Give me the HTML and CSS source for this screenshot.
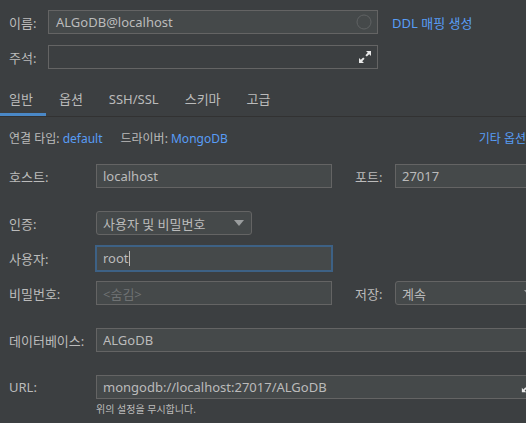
FILE: index.html
```html
<!DOCTYPE html>
<html lang="ko">
<head>
    <meta charset="UTF-8">
    <title>데이터 소스 - ALGoDB@localhost</title>
    <link rel="stylesheet" href="styles.css">
</head>
<body>
    <div class="page">
        <div class="top-row">
            <label class="top-label">이름:</label>
            <div class="field top-field">
                <span class="value">ALGoDB@localhost</span>
                <svg class="ring" width="16" height="16" viewBox="0 0 16 16"><circle cx="8" cy="8" r="7" fill="none" stroke="#5f6263" stroke-width="1"/></svg>
            </div>
            <a class="link ddl">DDL 매핑 생성</a>
        </div>
        <div class="top-row comment-row">
            <label class="top-label">주석:</label>
            <div class="field top-field">
                <span class="value"></span>
                <svg class="expand" width="14" height="14" viewBox="0 0 14 14">
                    <path d="M8 1h5v5l-1.8-1.8-2.4 2.4-1.4-1.4 2.4-2.4z" fill="#e8e8e8"/>
                    <path d="M6 13H1V8l1.8 1.8 2.4-2.4 1.4 1.4-2.4 2.4z" fill="#e8e8e8"/>
                </svg>
            </div>
        </div>

        <div class="tabs">
            <div class="tab active">일반</div>
            <div class="tab">옵션</div>
            <div class="tab">SSH/SSL</div>
            <div class="tab">스키마</div>
            <div class="tab">고급</div>
        </div>

        <div class="info-row">
            <span>연결 타입: <a class="link">default</a></span>
            <span class="driver">드라이버: <a class="link">MongoDB</a></span>
            <a class="link more">기타 옵션</a>
        </div>

        <div class="form">
            <div class="row host-row">
                <label class="label">호스트:</label>
                <div class="field short"><span class="value">localhost</span></div>
                <label class="side-label">포트:</label>
                <div class="field grow"><span class="value">27017</span></div>
            </div>
            <div class="row auth-row">
                <label class="label">인증:</label>
                <div class="field combo">
                    <span class="value">사용자 및 비밀번호</span>
                    <span class="arrow"></span>
                </div>
            </div>
            <div class="row user-row">
                <label class="label">사용자:</label>
                <div class="field short focused"><span class="value">root<span class="caret"></span></span></div>
            </div>
            <div class="row">
                <label class="label">비밀번호:</label>
                <div class="field short"><span class="value muted">&lt;숨김&gt;</span></div>
                <label class="side-label">저장:</label>
                <div class="field grow combo save">
                    <span class="value">계속</span>
                    <span class="arrow"></span>
                </div>
            </div>
            <div class="row db-row">
                <label class="label">데이터베이스:</label>
                <div class="field grow"><span class="value">ALGoDB</span></div>
            </div>
            <div class="row url-row">
                <label class="label">URL:</label>
                <div class="field grow url-field">
                    <span class="value">mongodb://localhost:27017/ALGoDB</span>
                    <svg class="expand small" width="12" height="12" viewBox="0 0 14 14">
                        <path d="M6 13H1V8l1.8 1.8 2.4-2.4 1.4 1.4-2.4 2.4z" fill="#e8e8e8"/>
                    </svg>
                </div>
            </div>
            <div class="hint">위의 설정을 무시합니다.</div>
        </div>
    </div>
</body>
</html>
```

FILE: styles.css
```css
body {
    margin: 0;
    background-color: #3c3f41;
    color: #bbbbbb;
    font-family: "Noto Sans", "Noto Sans CJK KR", sans-serif;
    font-size: 13px;
    overflow: hidden;
}
.page {
    width: 545px;
    padding-top: 10px;
}
.link {
    color: #589df6;
    text-decoration: none;
}
.field {
    box-sizing: border-box;
    display: flex;
    align-items: center;
    height: 24px;
    background: #45494a;
    border: 1px solid #646464;
    padding: 0 6px;
}
.field .value {
    flex: 1;
    white-space: nowrap;
    overflow: hidden;
}
.muted {
    color: #6f7273;
}

/* top part */
.top-row {
    display: flex;
    align-items: center;
    height: 24px;
}
.comment-row {
    margin-top: 11px;
}
.top-label {
    width: 39px;
    padding-left: 9px;
}
.top-field {
    width: 330px;
}
.top-field .value {
    padding-left: 1px;
}
.comment-row .top-field {
    background: #3c3f41;
}
.ring {
    margin-right: -1px;
}
.expand {
    margin-right: -1px;
}
.ddl {
    margin-left: 14px;
}

/* tabs */
.tabs {
    display: flex;
    margin-top: 16px;
    margin-left: -4px;
    height: 31px;
    border-bottom: 1px solid #323232;
}
.tab {
    padding: 0 13px;
    line-height: 29px;
    border-bottom: 3px solid transparent;
}
.tab.active {
    border-bottom-color: #4a88c7;
}

.info-row {
    display: flex;
    align-items: center;
    height: 20px;
    margin-top: 11px;
    padding-left: 9px;
    font-size: 12px;
}
.driver {
    margin-left: 18px;
}
.more {
    margin-left: auto;
    margin-right: 19px;
}

/* main form */
.form {
    padding-top: 16px;
}
.row {
    display: flex;
    align-items: center;
    height: 24px;
    margin-bottom: 23px;
}
.label {
    width: 87px;
    padding-left: 9px;
    flex-shrink: 0;
}
.field.short {
    width: 236px;
}
.side-label {
    width: 40px;
    margin-left: 23px;
}
.field.grow {
    flex: 1;
}
.combo {
    width: 156px;
    border-radius: 3px;
}
.arrow {
    width: 0;
    height: 0;
    border-left: 5px solid transparent;
    border-right: 5px solid transparent;
    border-top: 6px solid #9a9d9e;
    margin-right: 1px;
}
.save {
    margin-right: 3px;
}
.auth-row {
    margin-bottom: 9px;
}
.user-row {
    height: 28px;
    margin-bottom: 9px;
}
.field.focused {
    height: 27px;
    width: 238px;
    margin-left: -1px;
    border: 2px solid #3d6185;
    padding-left: 6px;
}
.caret {
    display: inline-block;
    width: 1px;
    height: 15px;
    background: #bbbbbb;
    vertical-align: -3px;
}
.url-row {
    margin-bottom: 2px;
}
.url-field {
    padding-right: 12px;
}
.hint {
    padding-left: 96px;
    font-size: 10px;
    line-height: 16px;
}
```
